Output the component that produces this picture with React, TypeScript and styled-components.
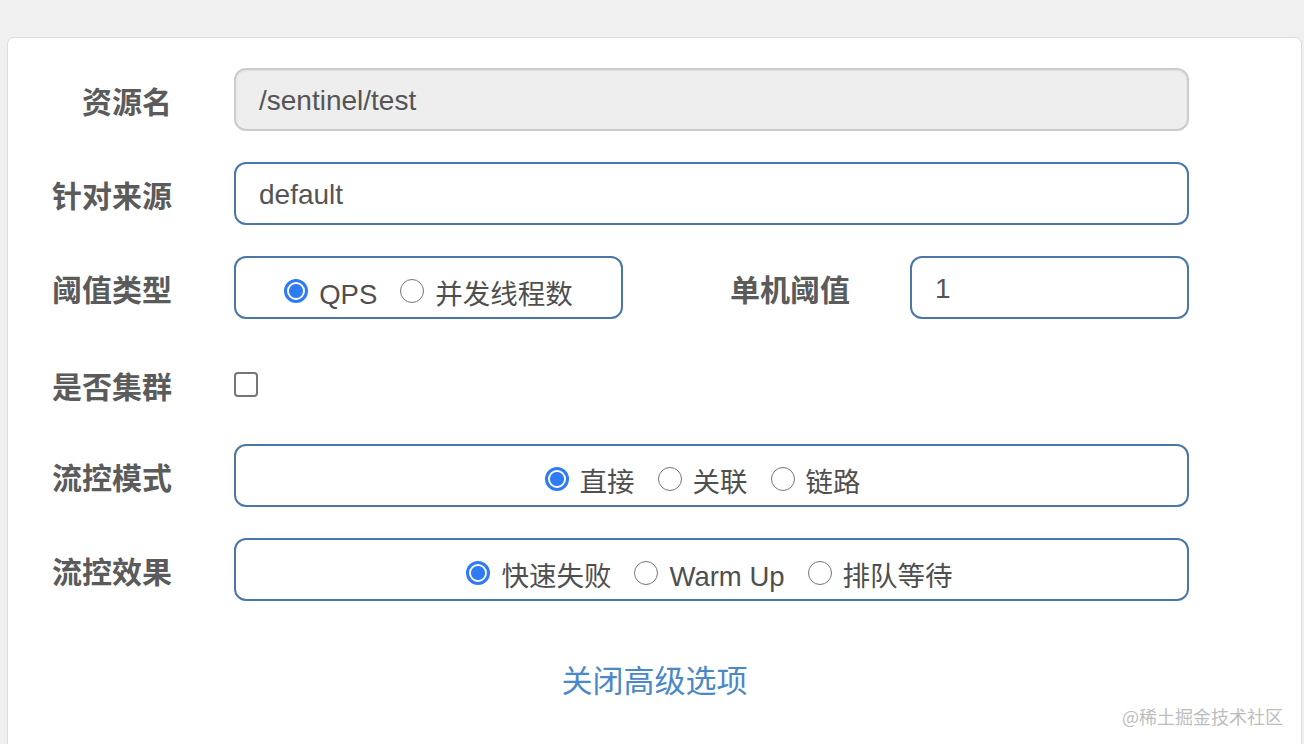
import React from "react";
import styled, { createGlobalStyle } from "styled-components";

const GlobalStyle = createGlobalStyle`
  html, body { margin: 0; padding: 0; background: #f0f0f0; }
  body { font-family: "Liberation Sans", "Noto Sans CJK SC", sans-serif; }
  * { box-sizing: border-box; }
`;

const Page = styled.div`
  height: 744px;
  overflow: hidden;
  padding: 37px 2px 0 7px;
  position: relative;
`;

const Card = styled.div`
  background: #fff;
  border: 1px solid #dcdcdc;
  border-radius: 7px;
  height: 760px;
  padding: 30px 112px 0 0;
  display: flex;
  flex-direction: column;
  gap: 31px;
`;

const Row = styled.div<{ $pad?: number }>`
  display: grid;
  grid-template-columns: 164px 1fr;
  column-gap: 62px;
  align-items: center;
  min-height: 63px;
  padding-top: ${(p) => p.$pad ?? 0}px;
`;

const Label = styled.div`
  text-align: right;
  font-family: "Noto Sans CJK SC", "Liberation Sans", sans-serif;
  font-weight: 700;
  font-size: 30px;
  color: #5b5b5b;
  line-height: 1;
`;

const TextBox = styled.div<{ $disabled?: boolean }>`
  height: 63px;
  border-radius: 12px;
  border: 2px solid ${(p) => (p.$disabled ? "#cccccc" : "#4a77a8")};
  background: ${(p) => (p.$disabled ? "#eeeeee" : "#ffffff")};
  box-shadow: ${(p) => (p.$disabled ? "inset 0 1px 2px rgba(0,0,0,0.06)" : "none")};
  display: flex;
  align-items: center;
  padding: 3px 0 0 23px;
  font-size: 28px;
  color: #555;
`;

const GroupBox = styled.div<{ $width?: number; $trail?: number }>`
  height: 63px;
  ${(p) => (p.$width ? `width: ${p.$width}px;` : "")}
  border-radius: 12px;
  border: 2px solid #4a77a8;
  display: flex;
  align-items: center;
  justify-content: center;
  gap: 23px;
  padding: 14px ${(p) => p.$trail ?? 0}px 0 0;
`;

const Split = styled.div`
  display: flex;
  align-items: center;
`;

const SideLabel = styled(Label)`
  flex: 1;
  margin-right: 60px;
`;

const RadioItem = styled.label`
  display: inline-flex;
  align-items: center;
  gap: 11px;
  font-family: "Liberation Sans", "Noto Sans CJK SC", sans-serif;
  font-size: 27.5px;
  color: #4f4f4f;
  white-space: nowrap;
  line-height: 1;
`;

const RadioDot = styled.span<{ $checked?: boolean }>`
  width: 24px;
  height: 24px;
  border-radius: 50%;
  flex: none;
  margin-top: -8px;
  border: ${(p) => (p.$checked ? "3px solid #2f7bf4" : "1.6px solid #767676")};
  background: ${(p) => (p.$checked ? "radial-gradient(circle, #2f7bf4 0 6.5px, #fff 7.5px)" : "#fff")};
`;

const CheckBox = styled.span`
  width: 24px;
  height: 25px;
  border: 2px solid #767676;
  border-radius: 4px;
  background: #fff;
  display: block;
`;

const LinkRow = styled.div`
  text-align: center;
  padding: 24px 0 0 112px;
`;

const Link = styled.a`
  font-family: "Noto Sans CJK SC", sans-serif;
  font-size: 31px;
  color: #4a88c7;
  text-decoration: none;
  cursor: pointer;
`;

const Watermark = styled.div`
  position: absolute;
  right: 21px;
  bottom: 19px;
  font-family: "Noto Sans CJK SC", sans-serif;
  font-size: 18px;
  color: #bdbdbd;
  line-height: 1;
`;

type Opt = { label: string; checked?: boolean };

const RadioGroup: React.FC<{ options: Opt[]; width?: number; trail?: number }> = ({ options, width, trail }) => (
  <GroupBox $width={width} $trail={trail}>
    {options.map((o) => (
      <RadioItem key={o.label}>
        <RadioDot $checked={o.checked} />
        {o.label}
      </RadioItem>
    ))}
  </GroupBox>
);

export default function App() {
  return (
    <>
      <GlobalStyle />
      <Page>
        <Card>
          <Row>
            <Label>资源名</Label>
            <TextBox $disabled>/sentinel/test</TextBox>
          </Row>
          <Row>
            <Label>针对来源</Label>
            <TextBox>default</TextBox>
          </Row>
          <Row>
            <Label>阈值类型</Label>
            <Split>
              <RadioGroup width={389} options={[{ label: "QPS", checked: true }, { label: "并发线程数" }]} />
              <SideLabel>单机阈值</SideLabel>
              <TextBox style={{ width: 279 }}>1</TextBox>
            </Split>
          </Row>
          <Row $pad={6}>
            <Label>是否集群</Label>
            <CheckBox />
          </Row>
          <Row>
            <Label>流控模式</Label>
            <RadioGroup trail={18} options={[{ label: "直接", checked: true }, { label: "关联" }, { label: "链路" }]} />
          </Row>
          <Row>
            <Label>流控效果</Label>
            <RadioGroup trail={4} options={[{ label: "快速失败", checked: true }, { label: "Warm Up" }, { label: "排队等待" }]} />
          </Row>
          <LinkRow>
            <Link>关闭高级选项</Link>
          </LinkRow>
        </Card>
        <Watermark>@稀土掘金技术社区</Watermark>
      </Page>
    </>
  );
}
